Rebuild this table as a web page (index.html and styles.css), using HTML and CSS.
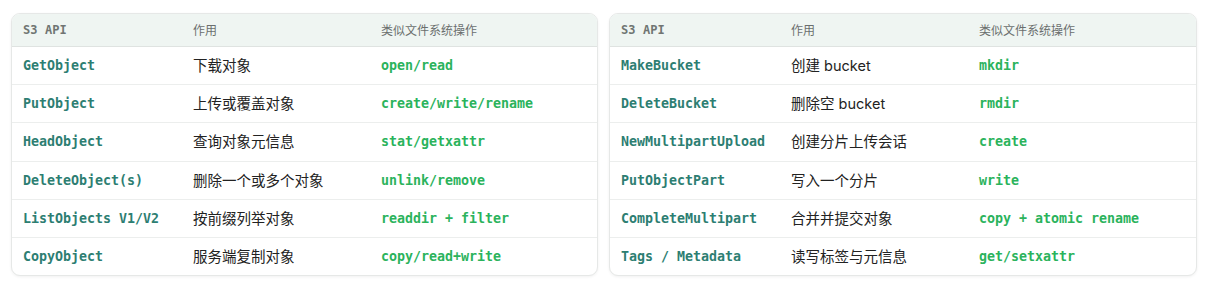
FILE: index.html
```html
<!DOCTYPE html>
<html lang="zh">
<head>
<meta charset="utf-8">
<link rel="stylesheet" href="styles.css">
</head>
<body>
<div class="wrap">
  <div class="card">
    <table>
      <colgroup><col class="c1"><col class="c2"><col></colgroup>
      <thead><tr><th class="mono">S3 API</th><th>作用</th><th>类似文件系统操作</th></tr></thead>
      <tbody>
        <tr><td class="api">GetObject</td><td>下载对象</td><td class="fs">open/read</td></tr>
        <tr><td class="api">PutObject</td><td>上传或覆盖对象</td><td class="fs">create/write/rename</td></tr>
        <tr><td class="api">HeadObject</td><td>查询对象元信息</td><td class="fs">stat/getxattr</td></tr>
        <tr><td class="api">DeleteObject(s)</td><td>删除一个或多个对象</td><td class="fs">unlink/remove</td></tr>
        <tr><td class="api">ListObjects V1/V2</td><td>按前缀列举对象</td><td class="fs">readdir + filter</td></tr>
        <tr><td class="api">CopyObject</td><td>服务端复制对象</td><td class="fs">copy/read+write</td></tr>
      </tbody>
    </table>
  </div>
  <div class="card">
    <table>
      <colgroup><col class="c1"><col class="c2"><col></colgroup>
      <thead><tr><th class="mono">S3 API</th><th>作用</th><th>类似文件系统操作</th></tr></thead>
      <tbody>
        <tr><td class="api">MakeBucket</td><td>创建 bucket</td><td class="fs">mkdir</td></tr>
        <tr><td class="api">DeleteBucket</td><td>删除空 bucket</td><td class="fs">rmdir</td></tr>
        <tr><td class="api">NewMultipartUpload</td><td>创建分片上传会话</td><td class="fs">create</td></tr>
        <tr><td class="api">PutObjectPart</td><td>写入一个分片</td><td class="fs">write</td></tr>
        <tr><td class="api">CompleteMultipart</td><td>合并并提交对象</td><td class="fs">copy + atomic rename</td></tr>
        <tr><td class="api">Tags / Metadata</td><td>读写标签与元信息</td><td class="fs">get/setxattr</td></tr>
      </tbody>
    </table>
  </div>
</div>
</body>
</html>
```
FILE: styles.css
```css
html, body {
  margin: 0;
  padding: 0;
  background: #ffffff;
}
body {
  font-family: "Inter", "Noto Sans CJK SC", sans-serif;
  color: #222;
}
.wrap {
  display: flex;
  gap: 11px;
  padding: 13px 11px;
  align-items: flex-start;
}
.card {
  border: 1px solid #e6e8e7;
  border-radius: 9px;
  overflow: hidden;
  background: #fff;
  box-shadow: 0 1px 3px rgba(0,0,0,0.06);
}
.card:first-child { width: 586px; }
.card:last-child { width: 587px; }
table {
  width: 100%;
  border-collapse: collapse;
  table-layout: fixed;
}
col.c1 { width: 170px; }
col.c2 { width: 188px; }
th {
  background: #eff5f2;
  height: 30px;
  padding: 0 0 2px 11px;
  text-align: left;
  font-weight: 400;
  font-size: 12px;
  color: #6b6f6e;
  border-bottom: 1px solid #dfe3e1;
}
th.mono {
  font-family: "DejaVu Sans Mono", monospace;
  font-size: 12px;
  font-weight: 700;
  color: #707573;
  letter-spacing: 0.1px;
  padding-bottom: 0;
}
td {
  height: 35.2px;
  padding: 0 0 2px 11px;
  font-size: 14.5px;
  border-bottom: 1px solid #eceeed;
  white-space: nowrap;
}
tbody tr:last-child td { border-bottom: none; }
td.api, td.fs {
  font-family: "DejaVu Sans Mono", monospace;
  font-weight: 700;
  font-size: 13.3px;
  padding-bottom: 0;
  height: 37.2px;
}
td.api { color: #2d7e72; }
td.fs { color: #2bb35c; }
```
